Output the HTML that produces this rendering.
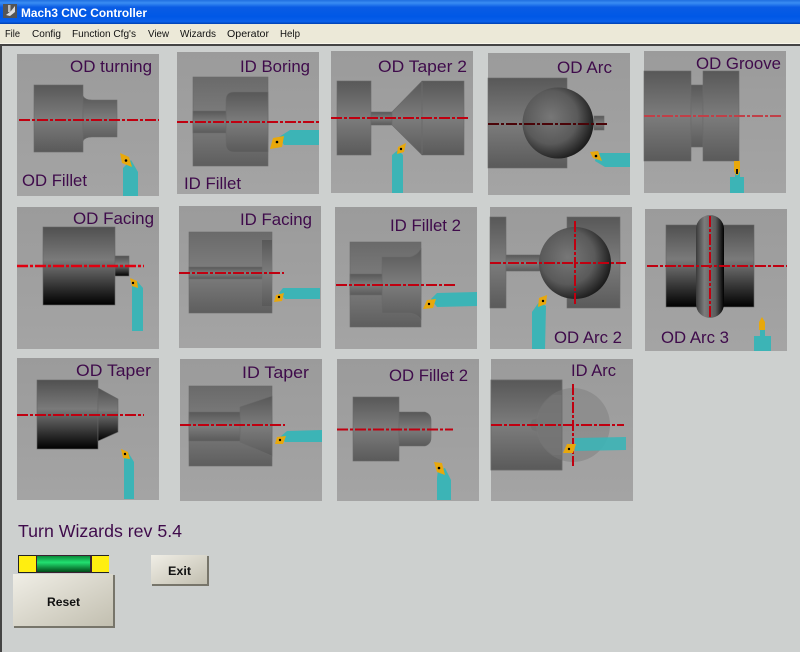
<!DOCTYPE html>
<html><head><meta charset="utf-8"><title>Mach3 CNC Controller</title>
<style>
html,body{margin:0;padding:0;background:#cdd0cf;width:800px;height:652px;overflow:hidden}
svg{display:block}
text{font-family:"Liberation Sans",sans-serif}
.l{font-size:17px;fill:#3f0b4b}
.m{font-size:10.5px;fill:#111}
.c{stroke:#c00010;stroke-width:2;stroke-dasharray:11 2 3 2;fill:none}
.t{fill:#3cb4b6}
.i{fill:#e8a80c}
.p{fill:url(#pan)}
.a{fill:url(#gA);stroke:#6a6a6a;stroke-width:.6}
.b{fill:url(#gB);stroke:#666;stroke-width:.6}
.e{fill:url(#gE)}
</style></head><body>
<svg width="800" height="652" viewBox="0 0 800 652" xmlns="http://www.w3.org/2000/svg">
<defs>
<linearGradient id="title" x1="0" y1="0" x2="0" y2="1"><stop offset="0" stop-color="#1f6fe0"/><stop offset=".12" stop-color="#3a8df2"/><stop offset=".3" stop-color="#0a5ce4"/><stop offset=".7" stop-color="#0058e6"/><stop offset=".9" stop-color="#0a60ea"/><stop offset="1" stop-color="#0040b0"/></linearGradient>
<linearGradient id="pan" x1="0" y1="0" x2="0" y2="1"><stop offset="0" stop-color="#9b9b9b"/><stop offset="1" stop-color="#a4a4a4"/></linearGradient>
<linearGradient id="gA" x1="0" y1="0" x2="0" y2="1"><stop offset="0" stop-color="#585858"/><stop offset=".5" stop-color="#7c7c7c"/><stop offset="1" stop-color="#5a5a5a"/></linearGradient>
<linearGradient id="gB" x1="0" y1="0" x2="0" y2="1"><stop offset="0" stop-color="#505050"/><stop offset=".42" stop-color="#7a7a7a"/><stop offset="1" stop-color="#000"/></linearGradient>
<linearGradient id="gE" x1="0" y1="0" x2="0" y2="1"><stop offset="0" stop-color="#6a6a6a"/><stop offset=".5" stop-color="#7e7e7e"/><stop offset="1" stop-color="#5e5e5e"/></linearGradient>
<linearGradient id="gP" x1="0" y1="0" x2="1" y2="0"><stop offset="0" stop-color="#3a3a3a"/><stop offset=".3" stop-color="#7c7c7c"/><stop offset=".7" stop-color="#5a5a5a"/><stop offset="1" stop-color="#000"/></linearGradient>
<radialGradient id="gS" cx=".4" cy=".42" r=".68"><stop offset="0" stop-color="#777"/><stop offset=".55" stop-color="#5a5a5a"/><stop offset="1" stop-color="#0c0c0c"/></radialGradient>
<linearGradient id="green" x1="0" y1="0" x2="0" y2="1"><stop offset="0" stop-color="#0a8a3a"/><stop offset=".4" stop-color="#22e070"/><stop offset="1" stop-color="#004a18"/></linearGradient>
<linearGradient id="btn" x1="0" y1="0" x2="1" y2="1"><stop offset="0" stop-color="#f0eee6"/><stop offset="1" stop-color="#c2bfb0"/></linearGradient>
</defs>

<rect width="800" height="652" fill="#cdd0cf"/>
<rect width="800" height="24" fill="url(#title)"/>
<rect x="3" y="4" width="14" height="14" fill="#555"/>
<path d="M6 15 L11 11 L15 6 L15 12 L10 16 Z" fill="#ddd"/><rect x="8" y="5" width="2.500" height="7" fill="#bbb"/>
<text x="21" y="17" font-size="12" font-weight="bold" fill="#fff" textLength="126" lengthAdjust="spacingAndGlyphs">Mach3 CNC Controller</text>

<rect y="24" width="800" height="19" fill="#ece9d8"/>
<rect y="43" width="800" height="1" fill="#f8f6ec"/>
<rect y="44" width="800" height="2" fill="#444"/>
<rect x="0" y="46" width="2" height="606" fill="#444"/>
<text class="m" x="5" y="37" textLength="15" lengthAdjust="spacingAndGlyphs">File</text>
<text class="m" x="32" y="37" textLength="29" lengthAdjust="spacingAndGlyphs">Config</text>
<text class="m" x="72" y="37" textLength="64" lengthAdjust="spacingAndGlyphs">Function Cfg's</text>
<text class="m" x="148" y="37" textLength="21" lengthAdjust="spacingAndGlyphs">View</text>
<text class="m" x="180" y="37" textLength="36" lengthAdjust="spacingAndGlyphs">Wizards</text>
<text class="m" x="227" y="37" textLength="42" lengthAdjust="spacingAndGlyphs">Operator</text>
<text class="m" x="280" y="37" textLength="20" lengthAdjust="spacingAndGlyphs">Help</text>

<!-- 1 OD turning -->
<rect class="p" x="17" y="54" width="142" height="142"/>
<rect class="a" x="34" y="85" width="49" height="67"/>
<path class="a" d="M83 96 Q85 100 92 100 L117 100 L117 137 L92 137 Q85 137 83 141 Z"/>
<line class="c" x1="19" y1="120" x2="159" y2="120"/>
<path class="t" d="M123 196 L123 168 L131 160 L138 172 L138 196 Z"/>
<path class="i" d="M120 153 L129 157 L132 167 L122 163 Z"/><circle cx="126" cy="160.500" r="1.300"/>
<text class="l" x="70" y="72" textLength="82" lengthAdjust="spacingAndGlyphs">OD turning</text>
<text class="l" x="22" y="186" textLength="65" lengthAdjust="spacingAndGlyphs">OD Fillet</text>

<!-- 2 ID Boring -->
<rect class="p" x="177" y="52" width="142" height="142"/>
<rect class="e" x="193" y="77" width="75" height="89" stroke="#6a6a6a" stroke-width=".6"/>
<path class="a" d="M268 92 L234 92 Q226 92 226 100 L226 144 Q226 152 234 152 L268 152 Z"/>
<rect class="a" x="193" y="111" width="33" height="22"/>
<line class="c" x1="177" y1="122" x2="319" y2="122"/>
<path class="t" d="M319 130 L290 130 L279 137 L284 145 L319 145 Z"/>
<path class="i" d="M273 138 L284 136 L282 147 L270 149 Z"/><circle cx="277" cy="142" r="1.300"/>
<text class="l" x="240" y="72" textLength="70" lengthAdjust="spacingAndGlyphs">ID Boring</text>
<text class="l" x="184" y="189" textLength="57" lengthAdjust="spacingAndGlyphs">ID Fillet</text>

<!-- 3 OD Taper 2 -->
<rect class="p" x="331" y="51" width="142" height="142"/>
<rect class="a" x="337" y="81" width="34" height="74"/>
<rect class="a" x="371" y="112" width="21" height="13"/>
<path class="a" d="M392 112 L422 81 L464 81 L464 155 L422 155 L392 125 Z"/>
<line x1="422" y1="82" x2="422" y2="154" stroke="#6a6a6a"/>
<line class="c" x1="331" y1="118" x2="468" y2="118"/>
<path class="t" d="M392 193 L392 155 L398 150 L403 155 L403 193 Z"/>
<path class="i" d="M398 147 L406 143 L404 152 L397 154 Z"/><circle cx="401" cy="149" r="1.200"/>
<text class="l" x="378" y="72" textLength="89" lengthAdjust="spacingAndGlyphs">OD Taper 2</text>

<!-- 4 OD Arc -->
<rect class="p" x="488" y="53" width="142" height="142"/>
<rect class="a" x="488" y="78" width="79" height="90"/>
<rect class="a" x="594" y="116" width="10" height="14"/>
<circle cx="558" cy="123" r="35.500" fill="url(#gS)"/>
<line class="c" x1="488" y1="124" x2="608" y2="124" style="stroke:#4a0408"/>
<path class="t" d="M597 153 L630 153 L630 167 L605 167 L595 161 Z"/>
<path class="i" d="M590 152 L598 151 L602 161 L593 158 Z"/><circle cx="596" cy="156" r="1.300"/>
<text class="l" x="557" y="73" textLength="55" lengthAdjust="spacingAndGlyphs">OD Arc</text>

<!-- 5 OD Groove -->
<rect class="p" x="644" y="51" width="142" height="142"/>
<rect class="a" x="644" y="71" width="47" height="90"/>
<rect class="a" x="691" y="85" width="12" height="62"/>
<rect class="a" x="703" y="71" width="36" height="90"/>
<line class="c" x1="644" y1="116" x2="781" y2="116" style="stroke:#c04048"/>
<rect class="t" x="730" y="177" width="14" height="16"/>
<rect class="t" x="735" y="172" width="5" height="6"/>
<path class="i" d="M734 161 L740 161 L740 171 L738 175 L736 175 L734 171 Z"/>
<rect x="736" y="169" width="2" height="5" fill="#111"/>
<text class="l" x="696" y="69" textLength="85" lengthAdjust="spacingAndGlyphs">OD Groove</text>

<!-- 6 OD Facing -->
<rect class="p" x="17" y="207" width="142" height="142"/>
<rect class="b" x="43" y="227" width="72" height="78"/>
<rect class="b" x="115" y="256" width="14" height="20"/>
<line class="c" x1="17" y1="266" x2="144" y2="266" style="stroke:#e00010;stroke-width:2.500"/>
<path class="t" d="M132 331 L132 286 L137 281 L143 288 L143 331 Z"/>
<path class="i" d="M130 278 L137 281 L138 288 L132 286 Z"/><circle cx="133" cy="283" r="1.200"/>
<text class="l" x="73" y="224" textLength="81" lengthAdjust="spacingAndGlyphs">OD Facing</text>

<!-- 7 ID Facing -->
<rect class="p" x="179" y="206" width="142" height="142"/>
<rect class="e" x="189" y="232" width="83" height="81" stroke="#6a6a6a" stroke-width=".6"/>
<rect x="262" y="240" width="10" height="66" fill="url(#gA)"/>
<rect class="a" x="189" y="267" width="73" height="12"/>
<line class="c" x1="179" y1="273" x2="284" y2="273"/>
<path class="t" d="M320 288 L320 299 L285 299 L279 293 L283 288 Z"/>
<path class="i" d="M276 295 L284 293 L282 301 L274 302 Z"/><circle cx="279" cy="297" r="1.200"/>
<text class="l" x="240" y="225" textLength="72" lengthAdjust="spacingAndGlyphs">ID Facing</text>

<!-- 8 ID Fillet 2 -->
<rect class="p" x="335" y="207" width="142" height="142"/>
<rect class="e" x="350" y="242" width="71" height="85" stroke="#6a6a6a" stroke-width=".6"/>
<path class="a" d="M382 257 L410 257 Q418 255 421 248 L421 320 Q418 314 410 313 L382 313 Z"/>
<rect class="a" x="350" y="274" width="32" height="21"/>
<line class="c" x1="336" y1="285" x2="457" y2="285"/>
<path class="t" d="M437 293 L477 292 L477 306 L437 307 L431 299 Z"/>
<path class="i" d="M427 300 L436 299 L433 308 L423 309 Z"/><circle cx="429" cy="304" r="1.200"/>
<text class="l" x="390" y="231" textLength="71" lengthAdjust="spacingAndGlyphs">ID Fillet 2</text>

<!-- 9 OD Arc 2 -->
<rect class="p" x="490" y="207" width="142" height="142"/>
<rect class="a" x="490" y="217" width="16" height="91"/>
<rect class="a" x="506" y="255" width="34" height="16"/>
<rect class="a" x="567" y="217" width="53" height="91"/>
<circle cx="575" cy="263" r="36" fill="url(#gS)"/>
<line class="c" x1="490" y1="263" x2="626" y2="263"/>
<line class="c" x1="575" y1="221" x2="575" y2="304"/>
<path class="t" d="M532 349 L532 312 L539 302 L546 306 L545 349 Z"/>
<path class="i" d="M539 298 L547 295 L546 304 L538 307 Z"/><circle cx="543" cy="301" r="1.200"/>
<text class="l" x="554" y="343" textLength="68" lengthAdjust="spacingAndGlyphs">OD Arc 2</text>

<!-- 10 OD Arc 3 -->
<rect class="p" x="645" y="209" width="142" height="142"/>
<rect class="b" x="666" y="225" width="88" height="82"/>
<rect x="696" y="215" width="28" height="103" rx="14" fill="url(#gP)"/>
<line class="c" x1="647" y1="266" x2="787" y2="266"/>
<line class="c" x1="710" y1="216" x2="710" y2="317"/>
<rect class="t" x="754" y="336" width="17" height="15"/>
<rect class="t" x="760" y="329" width="5" height="8"/>
<path class="i" d="M759 322 L762 317 L765 322 L765 330 L759 330 Z"/>
<text class="l" x="661" y="343" textLength="68" lengthAdjust="spacingAndGlyphs">OD Arc 3</text>

<!-- 11 OD Taper -->
<rect class="p" x="17" y="358" width="142" height="142"/>
<rect class="b" x="37" y="380" width="61" height="69"/>
<path class="b" d="M98 388 L118 399 L118 432 L98 441 Z"/>
<line class="c" x1="17" y1="415" x2="144" y2="415"/>
<path class="t" d="M124 499 L124 458 L128 452 L134 462 L134 499 Z"/>
<path class="i" d="M121 449 L128 452 L130 459 L123 458 Z"/><circle cx="125" cy="454" r="1.200"/>
<text class="l" x="76" y="376" textLength="75" lengthAdjust="spacingAndGlyphs">OD Taper</text>

<!-- 12 ID Taper -->
<rect class="p" x="180" y="359" width="142" height="142"/>
<rect class="e" x="189" y="386" width="83" height="80" stroke="#6a6a6a" stroke-width=".6"/>
<path class="a" d="M240 407 L272 396 L272 456 L240 442 Z"/>
<rect class="a" x="189" y="412" width="51" height="29"/>
<line class="c" x1="180" y1="425" x2="285" y2="425"/>
<path class="t" d="M287 431 L322 430 L322 442 L285 442 L280 437 Z"/>
<path class="i" d="M277 437 L286 436 L283 444 L275 444 Z"/><circle cx="280" cy="440" r="1.200"/>
<text class="l" x="242" y="378" textLength="67" lengthAdjust="spacingAndGlyphs">ID Taper</text>

<!-- 13 OD Fillet 2 -->
<rect class="p" x="337" y="359" width="142" height="142"/>
<rect class="a" x="353" y="397" width="46" height="64"/>
<path class="a" d="M399 412 L425 412 Q431 414 431 420 L431 438 Q431 444 425 446 L399 446 Z"/>
<line class="c" x1="337" y1="429.500" x2="453" y2="429.500"/>
<path class="t" d="M437 500 L437 478 L438 470 L445 468 L451 480 L451 500 Z"/>
<path class="i" d="M434 462 L442 463 L445 475 L437 472 Z"/><circle cx="439" cy="468" r="1.300"/>
<text class="l" x="389" y="381" textLength="79" lengthAdjust="spacingAndGlyphs">OD Fillet 2</text>

<!-- 14 ID Arc -->
<rect class="p" x="491" y="359" width="142" height="142"/>
<rect class="a" x="491" y="380" width="71" height="90"/>
<path d="M562 395 L553 395 Q540 404 538 418 L532 420 L530 425 L532 430 L538 432 Q540 446 553 455 L562 455 Z" fill="#707070" opacity=".75"/>
<circle cx="573" cy="425" r="37" fill="#7a7a7a" opacity=".45"/>
<rect x="491" y="380" width="71" height="90" fill="none" stroke="#6a6a6a" stroke-width=".6"/>
<path d="M575 438 L626 437 L626 450 L575 451 Z" fill="#3cb4b6" opacity=".9"/>
<line class="c" x1="491" y1="425" x2="624" y2="425"/>
<line class="c" x1="573" y1="384" x2="573" y2="466"/>
<path class="i" d="M567 444 L576 444 L573 453 L563 453 Z"/><circle cx="569" cy="449" r="1.200"/>
<text class="l" x="571" y="376" textLength="45" lengthAdjust="spacingAndGlyphs">ID Arc</text>

<!-- Bottom -->
<text x="18" y="537" font-size="17.700" fill="#3f0b4b" textLength="164" lengthAdjust="spacingAndGlyphs">Turn Wizards rev 5.4</text>
<rect x="18" y="555" width="91" height="18" fill="#222"/>
<rect x="19" y="556" width="17" height="16" fill="#ffee10"/>
<rect x="92" y="556" width="17" height="16" fill="#ffee10"/>
<rect x="36" y="555" width="56" height="18" fill="#3a2030"/>
<rect x="37" y="556" width="53" height="16" fill="url(#green)"/>

<rect x="14" y="575" width="101" height="53" fill="#77756a"/>
<rect x="13" y="574" width="100" height="52" fill="url(#btn)"/>
<text x="47" y="606" font-size="12" font-weight="bold" fill="#111" textLength="33" lengthAdjust="spacingAndGlyphs">Reset</text>

<rect x="152" y="556" width="57" height="30" fill="#77756a"/>
<rect x="151" y="555" width="56" height="29" fill="url(#btn)"/>
<text x="168" y="575" font-size="12" font-weight="bold" fill="#111" textLength="23" lengthAdjust="spacingAndGlyphs">Exit</text>
</svg>
</body></html>
